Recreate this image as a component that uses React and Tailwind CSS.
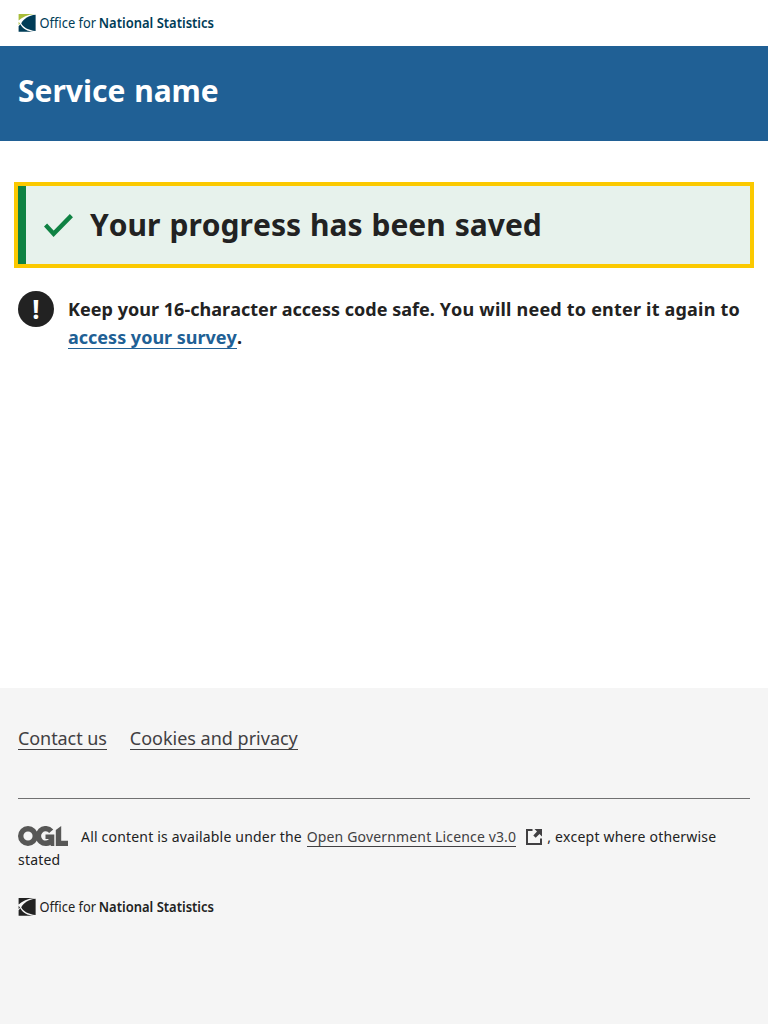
function OnsLogo({ className, dark }) {
  const ink = dark ? "#222222" : "#003c57";
  const leaf = dark ? "#222222" : "#a8bd3a";
  return (
    <svg
      className={className}
      width="210"
      height="20"
      viewBox="0 0 210 20"
      role="img"
      aria-label="Office for National Statistics"
    >
      <path d="M0.6 1H16.5C9.5 1.6 4.2 4 0.6 7.6Z" fill={leaf} />
      <path d="M17.6 1.8V17.9C10.5 17.4 5 14.2 3.2 10.2C6 5.8 10.5 2.4 17.6 1.8Z" fill={ink} />
      <path d="M0.6 8.8L2 10.4L0.6 12Z" fill={leaf} />
      <path d="M0.6 13.2L2.3 11.2C4.6 15.6 9.5 18.3 15.5 18.8H0.6Z" fill={ink} />
      <g fill={ink} style={{ fontFamily: '"Noto Sans", sans-serif' }}>
        <text x="21.5" y="15" fontSize="14.6" textLength="56.5" lengthAdjust="spacingAndGlyphs">Office for</text>
        <text x="80.8" y="15" fontSize="14.6" fontWeight="600" textLength="115.2" lengthAdjust="spacingAndGlyphs">National Statistics</text>
      </g>
    </svg>
  );
}

function OglLogo() {
  return (
    <svg className="mr-[13px] inline-block align-[-4px]" width="50" height="20" viewBox="0 0 50 20" role="img" aria-label="OGL">
      <g fill="none" stroke="#575756" strokeWidth="5.4">
        <circle cx="10" cy="10" r="7.3" />
        <path d="M33.2 5.2A7.3 7.3 0 1 0 33.4 14.5" />
      </g>
      <path d="M27.5 8.6H36.3V20H32.8L32.3 18L31.5 13H27.5ZM37.8 4L43.2 0V14.8H50V20H37.8Z" fill="#575756" />
    </svg>
  );
}

function ExternalIcon() {
  return (
    <svg className="ml-[10px] mr-[5px] inline-block align-[-3px]" width="16" height="16" viewBox="0 0 16 16" aria-hidden="true">
      <path d="M6.5 1H1V15H15V9.5" fill="none" stroke="#414042" strokeWidth="2" />
      <path d="M8.5 0H16V7.5L13.5 5L9.7 8.8L7.3 6.4L11 2.6Z" fill="#414042" />
    </svg>
  );
}

export default function App() {
  return (
    <div className="flex min-h-screen flex-col bg-white font-['Noto_Sans',sans-serif] text-lg leading-7 text-[#222222] [font-kerning:none]">
      <header>
        <div className="h-[46px] px-[18px] pt-[13px]">
          <OnsLogo className="block" />
        </div>
        <div className="h-[95px] bg-[#206095] px-[18px] pt-[25px]">
          <div className="text-[30px] font-bold leading-10 text-white [word-spacing:1px]">Service name</div>
        </div>
      </header>

      <main className="flex-1 px-[18px] pt-[45px]">
        <section className="flex h-[78px] items-center border-l-8 border-[#0f8243] bg-[#e7f2ec] pl-[18px] outline-4 outline-[#fbc900]">
          <svg className="mr-[17px] shrink-0" width="29" height="24" viewBox="0 0 29 24" aria-hidden="true">
            <path d="M1.5 12L9.6 20.7L27.4 2.6" fill="none" stroke="#0f8243" strokeWidth="4.4" strokeLinejoin="miter" />
          </svg>
          <h1 className="text-[30px] font-bold leading-10 tracking-[0.03px] [word-spacing:1px]">Your progress has been saved</h1>
        </section>

        <div className="mt-[27px] flex items-start gap-[14px]">
          <span className="flex size-9 shrink-0 items-center justify-center rounded-full bg-[#222222] text-[26px] font-bold leading-9 text-white" aria-hidden="true">
            !
          </span>
          <p className="pt-1 font-bold">
            <span className="tracking-[0.03px]">Keep your 16-character access code safe.</span>{" "}
            <span className="tracking-[0.2px]">You will need to enter it again to</span>{" "}
            <a href="#survey" className="inline-block h-[26px] border-b border-[#206095] text-[#206095]">access your survey</a>.
          </p>
        </div>
      </main>

      <footer className="h-[336px] bg-[#f5f5f5] px-[18px] pt-9">
        <nav className="flex h-[75px] items-start gap-[23px] border-b border-[#707071] text-[#414042]">
          <a href="#contact" className="h-[26px] border-b border-[#414042] tracking-[-0.08px]">Contact us</a>
          <a href="#cookies" className="h-[26px] border-b border-[#414042]">Cookies and privacy</a>
        </nav>
        <p className="mt-[26px] text-sm leading-[23px] tracking-[0.19px]">
          <OglLogo />
          All content is available under the{" "}
          <a href="#licence" className="ml-px border-b border-[#414042] tracking-[0.14px] text-[#414042]">Open Government Licence v3.0</a>
          <ExternalIcon />, except where otherwise stated
        </p>
        <OnsLogo dark className="mt-[26px] block" />
      </footer>
    </div>
  );
}
